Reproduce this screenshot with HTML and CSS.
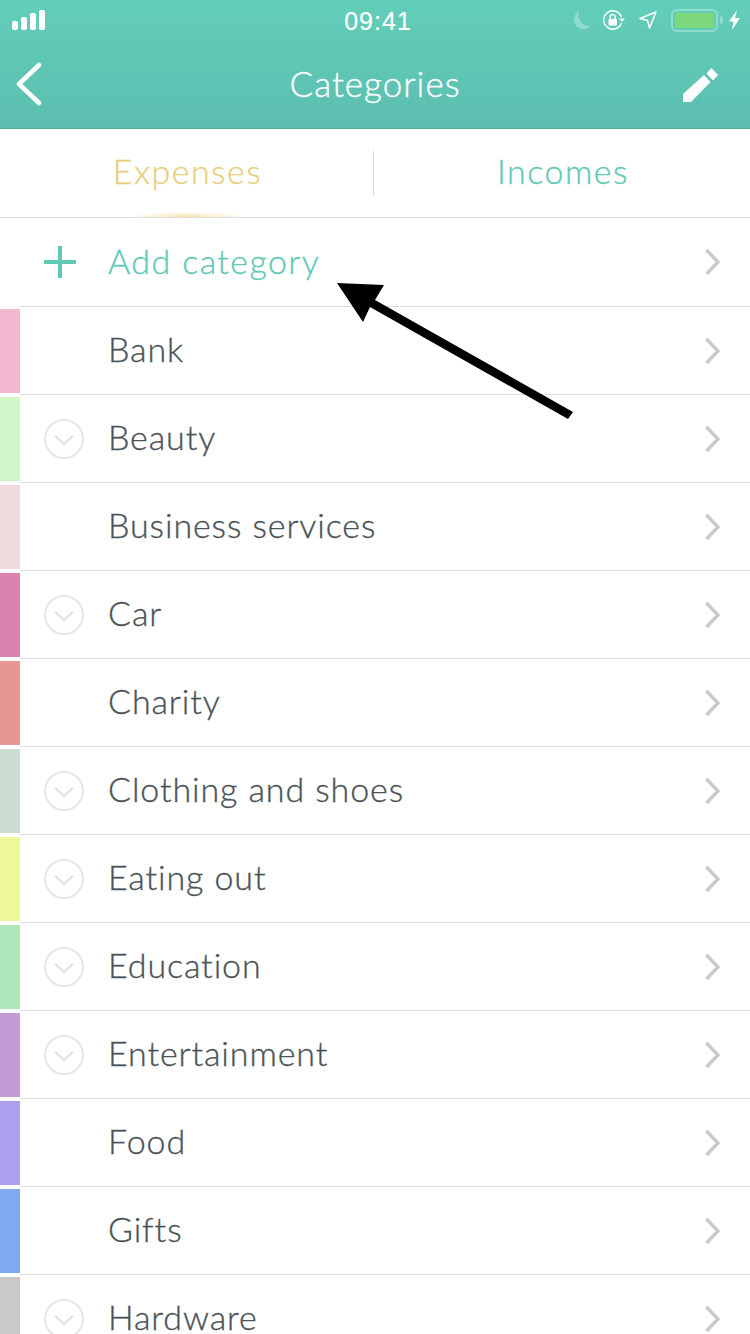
FILE: index.html
```html
<!DOCTYPE html>
<html lang="en">
<head>
  <meta charset="UTF-8" />
  <meta name="viewport" content="width=device-width, initial-scale=1.0"/>
  <title>Categories</title>
  <link rel="stylesheet" href="styles.css">
</head>
<body>

<div class="screen">
  <header class="topbar">
    <div class="status">
      <svg class="signal" width="33" height="20" viewBox="0 0 33 20">
        <rect x="0" y="11" width="6" height="9" rx="2"/>
        <rect x="9" y="7" width="6" height="13" rx="2"/>
        <rect x="18" y="3" width="6" height="17" rx="2"/>
        <rect x="27" y="0" width="6" height="20" rx="2"/>
      </svg>
      <span class="time">09:41</span>
      <div class="status-right">
        <svg class="moon" width="19" height="19" viewBox="0 0 19 19"><path d="M7.500 0A9.500 9.500 0 1 0 19 14.500 10.500 10.500 0 0 1 7.500 0Z" fill="#8edccb"/></svg>
        <svg class="lock" width="22" height="20" viewBox="0 0 22 20" fill="none" stroke="#fff" stroke-width="1.400">
          <path d="M18.500 7A9.200 9.200 0 1 0 18.500 13"/>
          <path d="M16 8.500h6l-3 3.500Z" fill="#fff" stroke="none"/>
          <rect x="5.500" y="9" width="8.500" height="6.500" rx="1" fill="#fff" stroke="none"/>
          <path d="M7.200 9V7a2.500 2.500 0 0 1 5 0v2"/>
        </svg>
        <svg class="gps" width="18" height="18" viewBox="0 0 18 18" fill="none" stroke="#fff" stroke-width="1.500" stroke-linejoin="round"><path d="M17 1 1 7.500 8.500 9.500 10.500 17Z"/></svg>
        <div class="battery"><div class="battery-fill"></div></div>
        <div class="battery-tip"></div>
        <svg class="bolt" width="11" height="20" viewBox="0 0 11 20"><path d="M8 0 0 11.500h4.500L3 20l8-12H6Z" fill="#fff"/></svg>
      </div>
    </div>
    <nav class="navbar">
      <svg class="back" width="26" height="44" viewBox="0 0 26 44" fill="none" stroke="#fff" stroke-width="4.500" stroke-linecap="round" stroke-linejoin="round"><path d="M23 3 3 22l20 19"/></svg>
      <h1>Categories</h1>
      <svg class="pencil" width="35" height="35" viewBox="0 0 35 35"><path d="M0 35V27L21 8l6.500 7L8 35ZM23.500 6.500 28.500 1 35 8l-5 5.500Z" fill="#fff"/></svg>
    </nav>
  </header>

  <div class="tabs">
    <div class="tab active">Expenses</div>
    <div class="tab-sep"></div>
    <div class="tab">Incomes</div>
  </div>

  <div class="row add">
    <svg class="plus" width="32" height="32" viewBox="0 0 32 32"><path d="M14 0h4v14h14v4H18v14h-4V18H0v-4h14Z" fill="#5fc9b5"/></svg>
    <span class="label">Add category</span>
    <svg class="chev" width="18" height="28" viewBox="0 0 18 28"><path d="M2.500 2 14 14 2.500 26"/></svg>
  </div>

  <div id="list"></div>
</div>

<svg class="arrow" width="750" height="1334" viewBox="0 0 750 1334">
  <path d="M337 283 384 285 375 300 573 412 568 419 370 307 363 322Z" fill="#000"/>
</svg>

<script>
  var cats = [
    ["Bank", "#f2b6cf", false],
    ["Beauty", "#d1f6c9", true],
    ["Business services", "#f0dcdc", false],
    ["Car", "#dc82ae", true],
    ["Charity", "#e89695", false],
    ["Clothing and shoes", "#ccdcd1", true],
    ["Eating out", "#eef898", true],
    ["Education", "#aee5b9", true],
    ["Entertainment", "#c39cd6", true],
    ["Food", "#ae9eee", false],
    ["Gifts", "#7faaef", false],
    ["Hardware", "#c9c9c9", true]
  ];

  var list = document.getElementById("list");
  cats.forEach(function(c) {
    var row = document.createElement("div");
    row.className = "row";
    var circle = c[2]
      ? '<svg class="expand" width="40" height="40" viewBox="0 0 40 40" fill="none" stroke="#e6e6e6" stroke-width="2"><circle cx="20" cy="20" r="19"/><path d="M11 17l9 8 9-8" stroke-width="2.500"/></svg>'
      : '<span class="expand"></span>';
    row.innerHTML = '<span class="swatch" style="background:' + c[1] + '"></span>' + circle +
      '<span class="label">' + c[0] + '</span>' +
      '<svg class="chev" width="18" height="28" viewBox="0 0 18 28"><path d="M2.500 2 14 14 2.500 26"/></svg>';
    list.appendChild(row);
  });
</script>

</body>
</html>
```

FILE: styles.css
```css
html, body {
  margin: 0;
  height: 1334px;
  overflow: hidden;
}

body {
  font-family: Lato, "Open Sans", sans-serif;
  background: #fff;
  position: relative;
}

.screen {
  width: 750px;
}

.topbar {
  height: 128px;
  background: linear-gradient(#62ceb8, #5cbeb0);
  border-bottom: 1px solid #58ab9f;
  color: #fff;
}

.status {
  height: 40px;
  display: flex;
  align-items: center;
  justify-content: space-between;
  padding: 0 10px 0 12px;
  position: relative;
}

.time {
  position: absolute;
  left: 6px;
  right: 0;
  top: 7px;
  text-align: center;
  font-family: "Liberation Sans", sans-serif;
  font-size: 25px;
  letter-spacing: 1px;
  line-height: 28px;
  -webkit-text-stroke: 0.2px #fff;
}

.signal {
  fill: #fff;
}

.status-right {
  display: flex;
  align-items: center;
}

.lock {
  margin-left: 12px;
}

.gps {
  margin-left: 14px;
}

.battery {
  box-sizing: border-box;
  width: 47px;
  height: 23px;
  margin-left: 14px;
  border: 2px solid #8edccb;
  border-radius: 6px;
  padding: 2px;
}

.battery-fill {
  height: 100%;
  background: #7cd87a;
  border-radius: 2px;
}

.battery-tip {
  width: 3px;
  height: 8px;
  margin-left: 2px;
  background: #8edccb;
  border-radius: 0 3px 3px 0;
}

.bolt {
  margin-left: 6px;
}

.navbar {
  height: 88px;
  display: flex;
  align-items: center;
  padding: 0 32px 0 16px;
}

.navbar h1 {
  flex: 1;
  margin: 0 0 0 25px;
  padding-bottom: 2px;
  text-align: center;
  font-size: 35px;
  font-weight: 300;
  letter-spacing: 1px;
  -webkit-text-stroke: 0.35px #fff;
}

.tabs {
  height: 89px;
  display: flex;
  align-items: center;
  border-bottom: 1px solid #dedede;
  box-sizing: border-box;
}

.tab {
  flex: 1;
  padding-left: 2px;
  text-align: center;
  font-size: 34px;
  font-weight: 300;
  letter-spacing: 1.5px;
  color: #5fc9b5;
  -webkit-text-stroke: 0.35px #5fc9b5;
  position: relative;
  align-self: stretch;
  line-height: 84px;
}

.tab.active {
  flex: none;
  width: 371px;
  color: #e8d07e;
  -webkit-text-stroke: 0.35px #e8d07e;
}

.tab.active::after {
  content: "";
  position: absolute;
  left: 127px;
  width: 120px;
  bottom: 0;
  height: 5px;
  background: radial-gradient(ellipse at 50% 100%, #f5e3a8 0%, rgba(255,255,255,0) 70%);
}

.tab-sep {
  width: 1px;
  height: 45px;
  background: #dcdcdc;
}

.row {
  height: 88px;
  box-sizing: border-box;
  border-bottom: 1px solid #dedede;
  margin-left: 20px;
  display: flex;
  align-items: center;
  padding-right: 28px;
  position: relative;
}

.label {
  flex: 1;
  padding-bottom: 4px;
  font-size: 34px;
  font-weight: 300;
  letter-spacing: 0.9px;
  color: #4a5357;
  -webkit-text-stroke: 0.35px #4a5357;
}

.row.add {
  height: 89px;
}

.row.add .label {
  letter-spacing: 1.4px;
  color: #5fc9b5;
  -webkit-text-stroke: 0.35px #5fc9b5;
}

.plus {
  margin: 0 32px 0 24px;
}

.expand {
  width: 40px;
  height: 40px;
  margin: 0 24px;
  flex: none;
}

.swatch {
  position: absolute;
  left: -20px;
  top: 2px;
  width: 20px;
  height: 84px;
}

.chev {
  fill: none;
  stroke: #cbcbcb;
  stroke-width: 3.5;
}

.arrow {
  position: absolute;
  left: 0;
  top: 0;
}
```
